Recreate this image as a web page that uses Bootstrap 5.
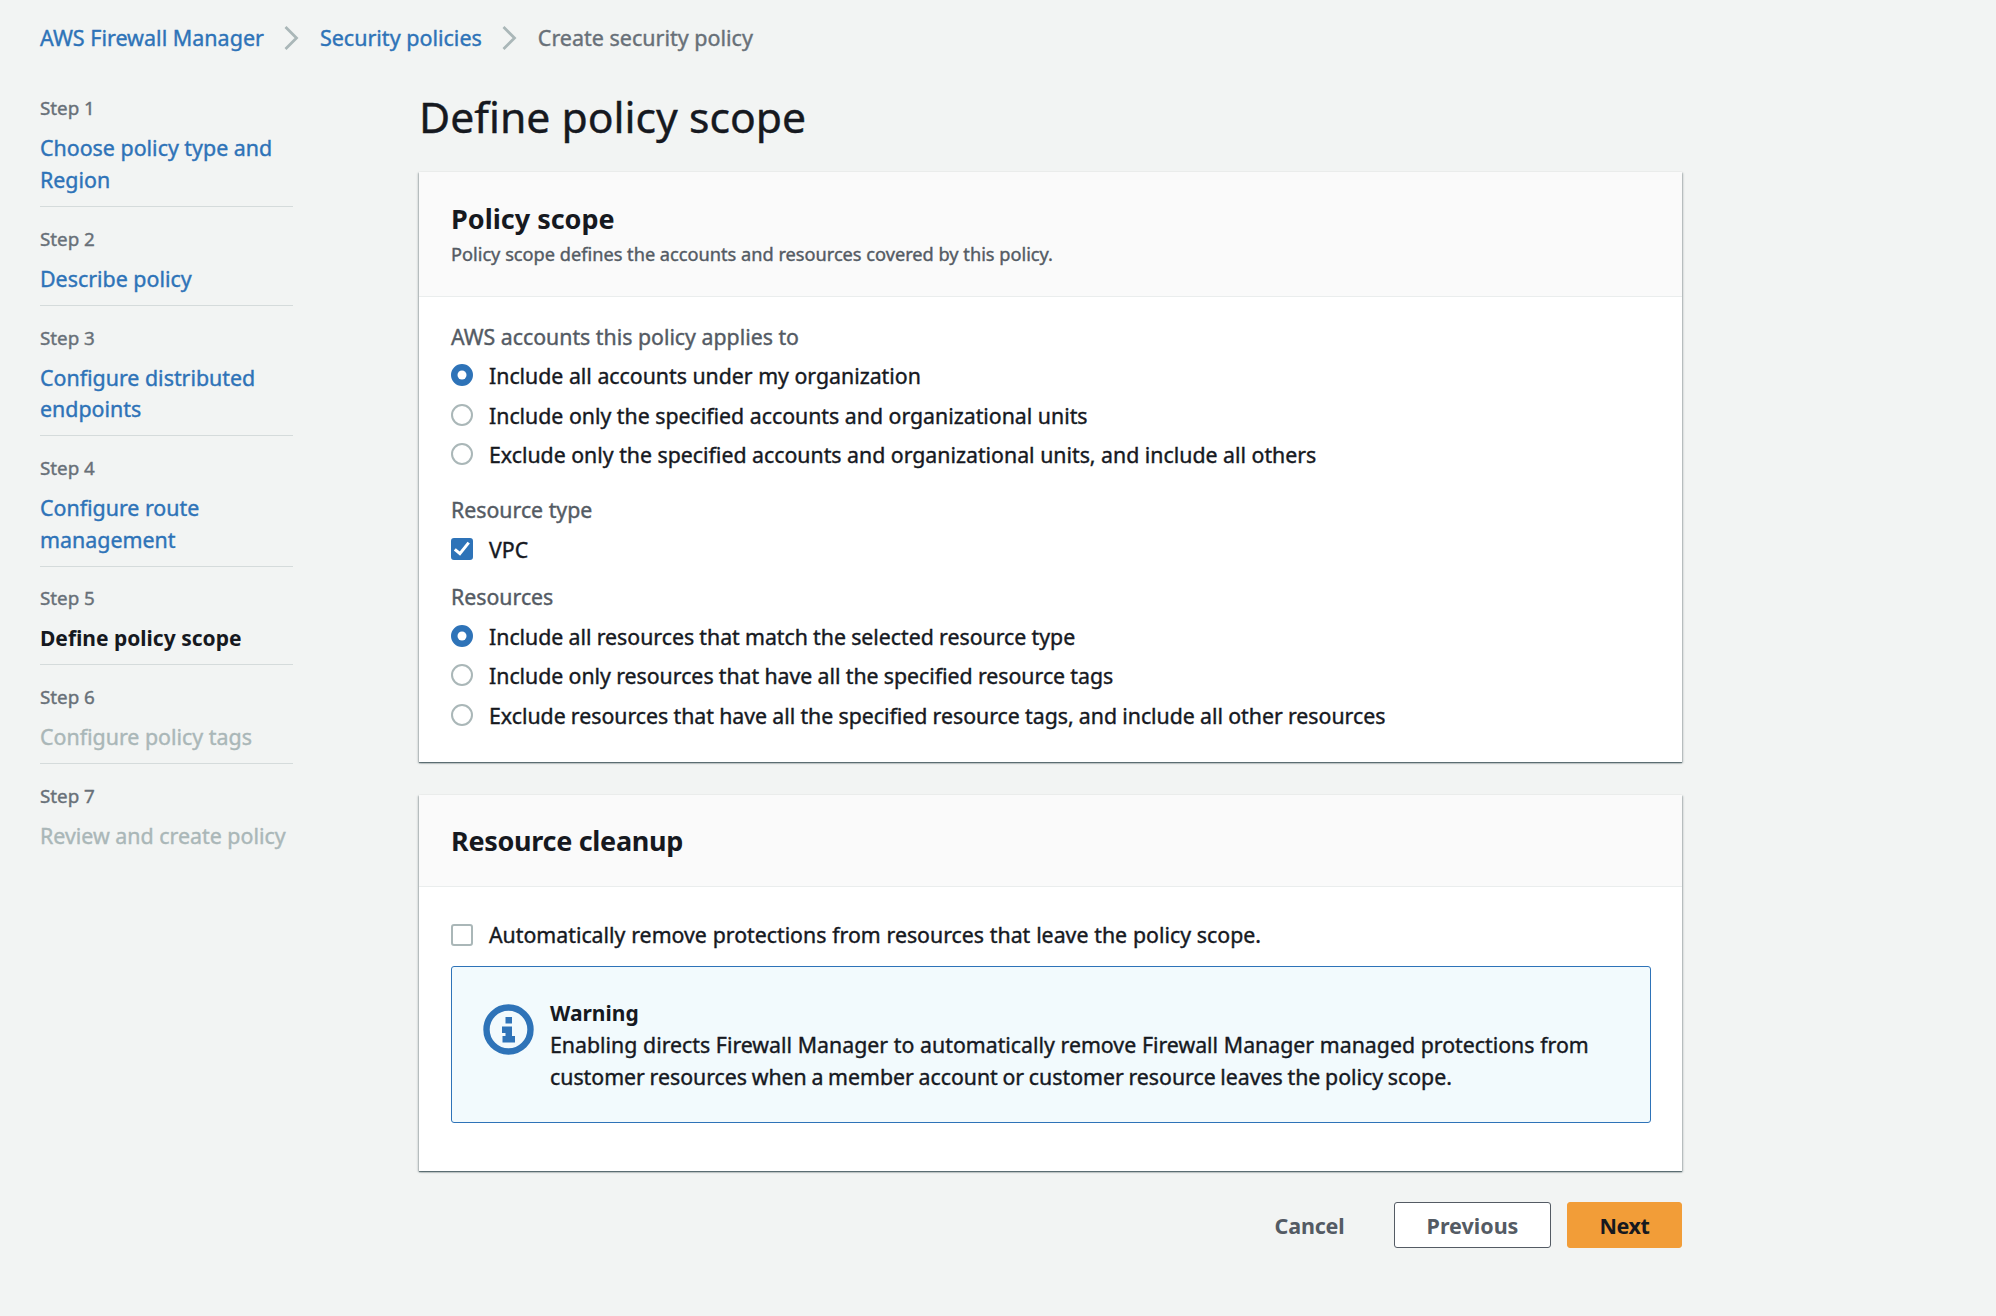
<!DOCTYPE html>
<html lang="en">
<head>
<meta charset="utf-8">
<meta name="viewport" content="width=device-width, initial-scale=1">
<title>Create security policy</title>
<link href="https://cdn.jsdelivr.net/npm/bootstrap@5.3.0/dist/css/bootstrap.min.css" rel="stylesheet">
<style>
body{background:#f2f4f3;color:#16191f;font-family:"Noto Sans","Open Sans",sans-serif;font-size:21.3px;line-height:31.5px;min-height:1316px;-webkit-text-stroke:.4px currentColor}
a{color:#2e73b8;text-decoration:none}
.fw-bold,h2,.btn-x{-webkit-text-stroke:0}
.crumbs{padding:22px 40px 0;height:76.5px;font-size:21.5px}
.crumbs svg{margin:4px 20.5px 0}
.crumbs .current{color:#687078}
.steps{width:253px;margin-left:40px;font-size:21.4px}
.step-item{padding:16.8px 0 10.5px;border-bottom:1px solid #d5dbdb}
.step-item:last-child{border-bottom:0}
.step-item .fw-bold{font-size:21px;padding-top:1px;margin-bottom:-1px}
.step-no{color:#687078;font-size:18.8px;margin-bottom:7.6px}
.step-off{color:#aab7b8}
.main-col{width:1263px;margin-left:126px}
.page-title{font-size:42.7px;line-height:56px;margin:12px 0 27px;font-weight:400}
.panel{border:0;border-radius:0;color:inherit;background:#fff;box-shadow:0 1px 1px 0 rgba(0,28,36,.45),1px 1px 2px 0 rgba(0,28,36,.25),-1px 1px 2px 0 rgba(0,28,36,.25)}
.panel-scope{margin-bottom:33px}
.panel-cleanup{margin-bottom:31px}
.panel-head{background:#fafafa;border-bottom:1px solid #eaeded;padding:28px 32px 0;border-radius:0!important}
.panel-scope .panel-head{height:125px}
.panel-cleanup .panel-head{height:92px;padding-top:27px}
.panel-head h2{font-size:27px;line-height:38px;font-weight:700;margin:0}
.panel-cleanup h2{letter-spacing:-.3px}
.sub{font-size:18.2px;line-height:32px;color:#545b64}
.panel-body{padding:24px 31px 31px 32px}
.panel-cleanup .panel-body{padding-top:33px;padding-bottom:48.5px}
.panel-cleanup .opt{margin-bottom:15px}
.panel-cleanup .opt span{margin-top:-1px;word-spacing:.3px}
.field-label{color:#545b64;margin-bottom:8px}
.label-type{margin-top:23.5px}
.label-res{margin-top:16px}
.opt{gap:16px;margin-bottom:8px}
.label-res~.opt{word-spacing:-.35px}
.opt .form-check-input{width:22px;height:22px;margin:4px 0 0;border:2px solid #aab7b8;flex:none;background-color:#fff;background-origin:border-box;background-size:22px 22px}
.opt .form-check-input[type=checkbox]{border-radius:3px}
.opt .form-check-input:checked{background-color:#2e73b8;border-color:#2e73b8}
.opt .form-check-input[type=radio]:checked{background-image:url("data:image/svg+xml,%3csvg xmlns='http://www.w3.org/2000/svg' viewBox='0 0 22 22'%3e%3ccircle cx='11' cy='11' r='4.5' fill='%23fff'/%3e%3c/svg%3e")}
.opt .form-check-input[type=checkbox]:checked{background-image:url("data:image/svg+xml,%3csvg xmlns='http://www.w3.org/2000/svg' viewBox='0 0 22 22'%3e%3cpath fill='none' stroke='%23fff' stroke-width='3' d='M3.800 11.300 8.900 15.700 17.700 4.600'/%3e%3c/svg%3e")}
.notice{border:1px solid #2e73b8;border-radius:3px;background:#f2fafd;padding:31px;height:157px}
.notice svg{margin:6px 16px 0 0;flex:none}
.notice .fw-bold{font-size:21px}
.notice .line-two{word-spacing:-.85px}
.notice .line-one{word-spacing:.2px}
.btn-x{font-size:21.5px;line-height:46px;font-weight:700;padding:0;border-radius:3px;height:46px}
.btn-prev{width:157px;background:#fff;border:1px solid #545b64;color:#545b64}
.btn-next{width:115px;background:#f29d38;border:1px solid #f29d38;color:#16191f;letter-spacing:-.4px}
.btn-cancel{width:71px;color:#545b64;border:0;margin-right:33px;line-height:48px;letter-spacing:-.2px}
</style>
</head>
<body>
<nav class="crumbs d-flex align-items-start" aria-label="breadcrumb">
<a href="#">AWS Firewall Manager</a>
<svg width="15" height="24" viewBox="0 0 15 24"><path d="M1.500 1 12.500 12 1.500 23" fill="none" stroke="#aab7b8" stroke-width="2.800"/></svg>
<a href="#">Security policies</a>
<svg width="15" height="24" viewBox="0 0 15 24"><path d="M1.500 1 12.500 12 1.500 23" fill="none" stroke="#aab7b8" stroke-width="2.800"/></svg>
<span class="current">Create security policy</span>
</nav>
<div class="d-flex align-items-start">
<aside class="steps">
<div class="step-item"><div class="step-no">Step 1</div><a href="#">Choose policy type and<br>Region</a></div>
<div class="step-item"><div class="step-no">Step 2</div><a href="#">Describe policy</a></div>
<div class="step-item"><div class="step-no">Step 3</div><a href="#">Configure distributed<br>endpoints</a></div>
<div class="step-item"><div class="step-no">Step 4</div><a href="#">Configure route<br>management</a></div>
<div class="step-item"><div class="step-no">Step 5</div><div class="fw-bold">Define policy scope</div></div>
<div class="step-item"><div class="step-no">Step 6</div><div class="step-off">Configure policy tags</div></div>
<div class="step-item"><div class="step-no">Step 7</div><div class="step-off">Review and create policy</div></div>
</aside>
<main class="main-col">
<h1 class="page-title">Define policy scope</h1>
<section class="card panel panel-scope">
<div class="card-header panel-head"><h2>Policy scope</h2><div class="sub">Policy scope defines the accounts and resources covered by this policy.</div></div>
<div class="panel-body">
<div class="field-label">AWS accounts this policy applies to</div>
<label class="opt d-flex"><input class="form-check-input" type="radio" name="acc" checked><span>Include all accounts under my organization</span></label>
<label class="opt d-flex"><input class="form-check-input" type="radio" name="acc"><span>Include only the specified accounts and organizational units</span></label>
<label class="opt d-flex"><input class="form-check-input" type="radio" name="acc"><span>Exclude only the specified accounts and organizational units, and include all others</span></label>
<div class="field-label label-type">Resource type</div>
<label class="opt d-flex"><input class="form-check-input" type="checkbox" checked><span>VPC</span></label>
<div class="field-label label-res">Resources</div>
<label class="opt d-flex"><input class="form-check-input" type="radio" name="res" checked><span>Include all resources that match the selected resource type</span></label>
<label class="opt d-flex"><input class="form-check-input" type="radio" name="res"><span>Include only resources that have all the specified resource tags</span></label>
<label class="opt d-flex mb-0"><input class="form-check-input" type="radio" name="res"><span>Exclude resources that have all the specified resource tags, and include all other resources</span></label>
</div>
</section>
<section class="card panel panel-cleanup">
<div class="card-header panel-head"><h2>Resource cleanup</h2></div>
<div class="panel-body">
<label class="opt d-flex"><input class="form-check-input" type="checkbox"><span>Automatically remove protections from resources that leave the policy scope.</span></label>
<div class="notice d-flex">
<svg width="51" height="51" viewBox="0 0 51 51"><circle cx="25.500" cy="25.500" r="22" fill="none" stroke="#2e73b8" stroke-width="6.400"/><path fill="#2e73b8" d="M22.500 13h6.500v6.500h-6.500zM19 22.500h10v9.500h3V38.500H19.500V32h3V29H19z"/></svg>
<div><div class="fw-bold">Warning</div><div><span class="line-one">Enabling directs Firewall Manager to automatically remove Firewall Manager managed protections from</span><br><span class="line-two">customer resources when a member account or customer resource leaves the policy scope.</span></div></div>
</div>
</div>
</section>
<div class="d-flex justify-content-end gap-3">
<button class="btn btn-x btn-cancel">Cancel</button>
<button class="btn btn-x btn-prev">Previous</button>
<button class="btn btn-x btn-next">Next</button>
</div>
</main>
</div>
<script src="https://cdn.jsdelivr.net/npm/bootstrap@5.3.0/dist/js/bootstrap.bundle.min.js"></script>
</body>
</html>
